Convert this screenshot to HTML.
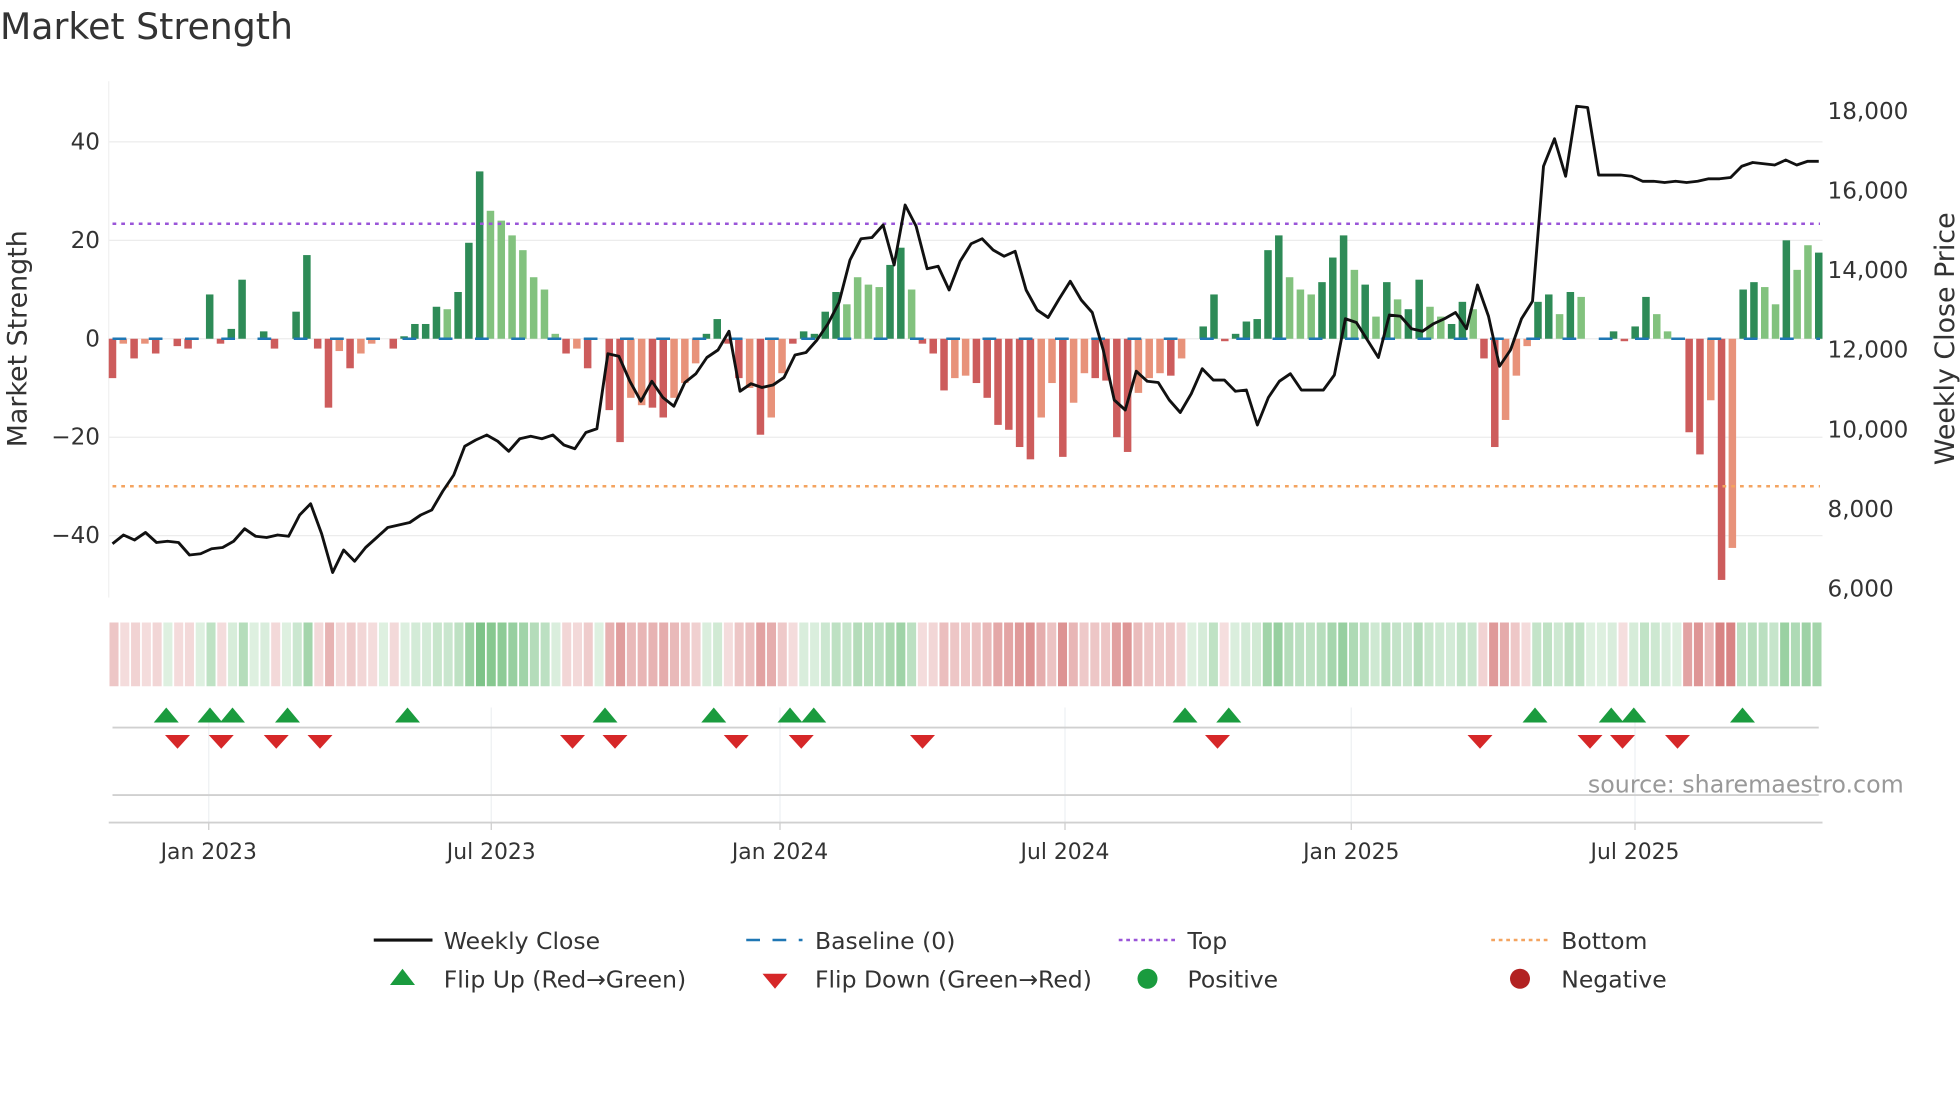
<!DOCTYPE html>
<html><head><meta charset="utf-8"><style>
html,body{margin:0;padding:0;background:#fff;width:1960px;height:1102px;overflow:hidden}
svg{display:block;font-family:"DejaVu Sans","Liberation Sans",sans-serif}
</style></head><body>
<svg id="s" width="1960" height="1102" viewBox="0 0 1568 881.6" xmlns="http://www.w3.org/2000/svg">
<text x="0" y="31" font-size="29" fill="#333">Market Strength</text>
<g id="g"></g>
</svg>
<script>
var V=[-8,-1,-4,-1,-3,0,-1.5,-2,0,9,-1,2,12,0,1.5,-2,0,5.5,17,-2,-14,-2.5,-6,-3,-1,0,-2,0.5,3,3,6.5,6,9.5,19.5,34,26,24,21,18,12.5,10,1,-3,-2,-6,0,-14.5,-21,-12,-13.5,-14,-16,-12,-9,-5,1,4,-1,-8,-10,-19.5,-16,-7,-1,1.5,1,5.5,9.5,7,12.5,11,10.5,15,18.5,10,-1,-3,-10.5,-8,-7.5,-9,-12,-17.5,-18.5,-22,-24.5,-16,-9,-24,-13,-7,-8,-8.5,-20,-23,-11,-8,-7,-7.5,-4,0,2.5,9,-0.5,1,3.5,4,18,21,12.5,10,9,11.5,16.5,21,14,11,4.5,11.5,8,6,12,6.5,4.5,3,7.5,6,-4,-22,-16.5,-7.5,-1.5,7.5,9,5,9.5,8.5,0,0,1.5,-0.5,2.5,8.5,5,1.5,0,-19,-23.5,-12.5,-49,-42.5,10,11.5,10.5,7,20,14,19,17.5];
var LT=[0,1,0,1,0,0,0,0,0,0,0,0,0,0,0,0,0,0,0,0,0,1,0,1,1,0,0,0,0,0,0,1,0,0,0,1,1,1,1,1,1,1,0,1,0,0,0,0,1,1,0,0,1,1,1,0,0,0,0,1,0,1,1,0,0,0,0,0,1,1,1,1,0,0,1,0,0,0,1,1,0,0,0,0,0,0,1,1,0,1,1,0,0,0,0,1,1,1,0,1,0,0,0,0,0,0,0,0,0,1,1,1,0,0,0,1,0,1,0,1,0,0,1,1,0,0,1,0,0,1,1,1,0,0,1,0,1,0,0,0,0,0,0,1,1,0,0,0,1,0,1,0,0,1,1,0,1,1,0,1];
var P=[435,428,432,426,434,433,434,444,443,439,438,433,423,429,430,428,429,412,403,427,458,440,449,438,430,422,420,418,412,408,393,380,357,352,348,353,361,351,349,351,348,356,359,346,343,283,285,305,321,305,318,325,306,299,286,280,265,313,307,310,308,302,284,282,272,259,242,208,191,190,180,212,164,181,215,213,232,209,195,191,200,205,201,232,248,254,239,225,240,250,280,320,328,297,305,306,320,330,315,295,304,304,313,312,340,318,305,299,312,312,312,300,255,258,272,286,252,253,263,265,259,255,250,263,228,253,293,280,255,241,133,111,141,85,86,140,140,140,141,145,145,146,145,146,145,143,143,142,133,130,131,132,128,132,129,129];
var h='',N=V.length,step=(1455-90)/(N-1);
function X(i){return 90+i*step}
function Y(v){return 271-v*3.9375}
[40,20,0,-20,-40].forEach(function(v){h+='<line x1="87" x2="1458" y1="'+Y(v)+'" y2="'+Y(v)+'" stroke="#ececec" stroke-width="1"/>';
h+='<text x="80" y="'+(Y(v)+6)+'" font-size="18.5" fill="#333" text-anchor="end">'+(v<0?'\u2212'+(-v):v)+'</text>';});
h+='<line x1="87" x2="87" y1="65" y2="478" stroke="#f0f0f0"/>';
var pr=['18,000','16,000','14,000','12,000','10,000','8,000','6,000'];
pr.forEach(function(t,k){h+='<text x="1462" y="'+(95+k*63.7)+'" font-size="18.5" fill="#333">'+t+'</text>';});
h+='<text transform="translate(21,271) rotate(-90)" font-size="21.5" fill="#333" text-anchor="middle">Market Strength</text>';
h+='<text transform="translate(1563,271) rotate(-90)" font-size="21.5" fill="#333" text-anchor="middle">Weekly Close Price</text>';
for(var i=0;i<N;i++){var v=V[i];if(v==0)continue;var c=v>0?(LT[i]?'#82c27e':'#2e8b57'):(LT[i]?'#e8927a':'#cd5c5c');
var y0=Y(0),y1=Y(v);h+='<rect x="'+(X(i)-3)+'" y="'+Math.min(y0,y1)+'" width="6" height="'+Math.abs(y1-y0)+'" fill="'+c+'"/>';}
h+='<line x1="90" x2="1456" y1="271" y2="271" stroke="#1f77b4" stroke-width="2" stroke-dasharray="11,18"/>';
h+='<line x1="90" x2="1456" y1="179" y2="179" stroke="#9a55d8" stroke-width="2" stroke-dasharray="3,4"/>';
h+='<line x1="90" x2="1456" y1="389" y2="389" stroke="#f4a460" stroke-width="2" stroke-dasharray="3,4"/>';
var pts=[],ps=(1455-90)/(P.length-1);for(i=0;i<P.length;i++)pts.push((90+i*ps).toFixed(1)+','+P[i]);
h+='<polyline points="'+pts.join(' ')+'" fill="none" stroke="#111" stroke-width="2.3" stroke-linejoin="round"/>';
var cw=1371/N;
for(i=0;i<N;i++){var v=V[i],a=Math.min(0.7,0.18+Math.abs(v)/55);var col=v>=0?'rgba(70,170,85,'+a+')':'rgba(200,80,80,'+a+')';
h+='<rect x="'+(87+i*cw+0.6)+'" y="498" width="'+(cw-1.4)+'" height="51" fill="'+col+'"/>';}
var tk=[[167,'Jan 2023'],[393,'Jul 2023'],[624,'Jan 2024'],[852,'Jul 2024'],[1081,'Jan 2025'],[1308,'Jul 2025']];
tk.forEach(function(t){h+='<line x1="'+t[0]+'" x2="'+t[0]+'" y1="566" y2="658" stroke="#eef0f3"/>';
h+='<line x1="'+t[0]+'" x2="'+t[0]+'" y1="658" y2="664" stroke="#ccc"/>';
h+='<text x="'+t[0]+'" y="687" font-size="17.5" fill="#333" text-anchor="middle">'+t[1]+'</text>';});
h+='<line x1="90" x2="1455" y1="582" y2="582" stroke="#d0d0d0" stroke-width="1.5"/>';
h+='<line x1="90" x2="1455" y1="636" y2="636" stroke="#d0d0d0" stroke-width="1.5"/>';
h+='<line x1="87" x2="1458" y1="658" y2="658" stroke="#d0d0d0" stroke-width="1.5"/>';
var up=[133,168,186,230,326,484,571,632,651,948,983,1228,1289,1307,1394],dn=[142,177,221,256,458,492,589,641,738,974,1184,1272,1298,1342];
up.forEach(function(x){h+='<polygon points="'+(x-10)+',578 '+(x+10)+',578 '+x+',566" fill="#1a9b3e"/>';});
dn.forEach(function(x){h+='<polygon points="'+(x-10)+',588 '+(x+10)+',588 '+x+',599" fill="#d62728"/>';});
h+='<text x="1523" y="634" font-size="19" fill="#999" text-anchor="end">source: sharemaestro.com</text>';
function T(x,y,s){h+='<text x="'+x+'" y="'+y+'" font-size="18.8" fill="#333">'+s+'</text>';}
h+='<line x1="299" x2="346" y1="752" y2="752" stroke="#111" stroke-width="2.5"/>';T(355,759,'Weekly Close');
h+='<line x1="597" x2="642" y1="752" y2="752" stroke="#1f77b4" stroke-width="2" stroke-dasharray="11,10"/>';T(652,759,'Baseline (0)');
h+='<line x1="895" x2="940" y1="752" y2="752" stroke="#9a55d8" stroke-width="2" stroke-dasharray="3,3"/>';T(950,759,'Top');
h+='<line x1="1193" x2="1238" y1="752" y2="752" stroke="#f4a460" stroke-width="2" stroke-dasharray="3,3"/>';T(1249,759,'Bottom');
h+='<polygon points="312,788 332,788 322,775" fill="#1a9b3e"/>';T(355,790,'Flip Up (Red\u2192Green)');
h+='<polygon points="610,779 630,779 620,791" fill="#d62728"/>';T(652,790,'Flip Down (Green\u2192Red)');
h+='<circle cx="918" cy="783" r="8" fill="#1a9b3e"/>';T(950,790,'Positive');
h+='<circle cx="1216" cy="783" r="8" fill="#b22222"/>';T(1249,790,'Negative');
document.getElementById('g').innerHTML=h;
</script>
</body></html>
